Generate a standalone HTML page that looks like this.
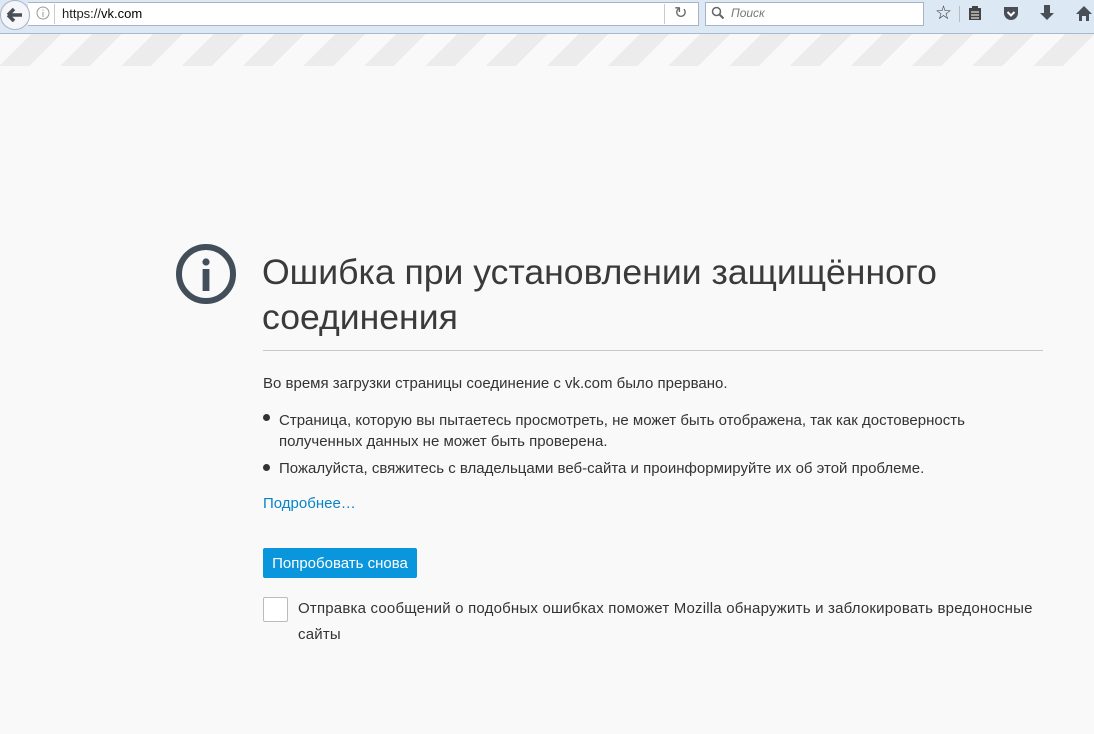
<!DOCTYPE html>
<html><head><meta charset="utf-8"><style>
html,body{margin:0;padding:0;width:1094px;height:734px;overflow:hidden;background:#f9f9fa;font-family:"Liberation Sans",sans-serif;color:#333}
.tb{position:absolute;left:0;top:0;width:1094px;height:33px;background:#dde8f5;border-bottom:1px solid #a9b8cc}
.url{position:absolute;left:28px;top:2px;width:670px;height:22px;background:#fff;border:1px solid #a8b4c4;border-left:none}
.back{position:absolute;left:0;top:0;width:28px;height:28px;border-radius:50%;background:#f4f6f9;border:1px solid #a8b4c4}
.search{position:absolute;left:705px;top:2px;width:217px;height:22px;background:#fff;border:1px solid #a8b4c4}
.stripes{position:absolute;left:0;top:34px;width:1094px;height:32px;background:repeating-linear-gradient(-45deg,#f9f9fa 0 22px,#ececec 22px 43px)}
.t{position:absolute;white-space:nowrap}
</style></head><body>
<div class="tb"></div>
<div class="url"></div>
<div class="back"><svg width="28" height="28"><path d="M7 14h14M7 14l6-6M7 14l6 6" stroke="#4a4f57" stroke-width="3.5" fill="none"/></svg></div>
<svg class="t" style="left:36px;top:6px" width="14" height="14"><circle cx="7" cy="7" r="6" stroke="#999" fill="none"/><path d="M7 6v5M7 3.5v1.2" stroke="#999"/></svg>
<div class="t" style="left:54px;top:4px;height:20px;border-left:1px solid #ccc"></div>
<div class="t" style="left:62px;top:6px;font-size:13px;color:#222">https://<span style="color:#000">vk.com</span></div>
<div class="t" style="left:664px;top:4px;height:20px;border-left:1px solid #ccc"></div>
<div class="t" style="left:674px;top:3px;font-size:16px;color:#666">&#8635;</div>
<div class="search"></div>
<svg class="t" style="left:711px;top:6px" width="14" height="14"><circle cx="5.5" cy="5.5" r="4" stroke="#666" stroke-width="1.5" fill="none"/><path d="M8.5 8.5l4 4" stroke="#666" stroke-width="2"/></svg>
<div class="t" style="left:731px;top:6px;font-size:12px;font-style:italic;color:#777">Поиск</div>
<div class="t" style="left:935px;top:2px;font-size:19px;color:#333">☆</div>
<div class="t" style="left:959px;top:6px;height:16px;border-left:1px solid #bbb"></div>
<svg class="t" style="left:968px;top:6px" width="14" height="15"><rect x="1" y="2" width="12" height="12" fill="#444"/><rect x="4" y="0" width="6" height="3" fill="#444"/><path d="M3 6h8M3 9h8M3 12h8" stroke="#fff"/></svg>
<svg class="t" style="left:1003px;top:6px" width="16" height="15"><path d="M1 1h14v6a7 7 0 0 1-14 0z" fill="#4a4f57"/><path d="M4.5 6l3.5 3.5 3.5-3.5" stroke="#fff" stroke-width="2" fill="none"/></svg>
<svg class="t" style="left:1040px;top:5px" width="14" height="16"><path d="M4 0h6v8h4l-7 7-7-7h4z" fill="#4a4f57"/></svg>
<svg class="t" style="left:1075px;top:5px" width="18" height="16"><path d="M9 1l8 8h-3v7h-3v-5h-4v5h-3v-7h-3z" fill="#4a4f57"/></svg>
<div class="stripes"></div>

<svg class="t" style="left:175px;top:243px" width="62" height="62"><circle cx="31" cy="31" r="27" stroke="#424e5a" stroke-width="6" fill="none"/><circle cx="31" cy="19" r="3.6" fill="#424e5a"/><rect x="27.6" y="26" width="6.8" height="22" fill="#424e5a"/></svg>
<div class="t" style="left:262px;top:250px;font-size:35.6px;font-weight:300;line-height:45px;color:#3a3a3a">Ошибка при установлении защищённого<br>соединения</div>
<div class="t" style="left:263px;top:350px;width:780px;border-top:1px solid #c8c8c8"></div>
<div class="t" style="left:263px;top:375px;font-size:15px">Во время загрузки страницы соединение с vk.com было прервано.</div>
<div class="t" style="left:263px;top:414px;width:7px;height:7px;border-radius:50%;background:#333"></div>
<div class="t" style="left:279px;top:410px;font-size:15px;line-height:21px">Страница, которую вы пытаетесь просмотреть, не может быть отображена, так как достоверность<br>полученных данных не может быть проверена.</div>
<div class="t" style="left:263px;top:464px;width:7px;height:7px;border-radius:50%;background:#333"></div>
<div class="t" style="left:279px;top:460px;font-size:15px">Пожалуйста, свяжитесь с владельцами веб-сайта и проинформируйте их об этой проблеме.</div>
<div class="t" style="left:263px;top:495px;font-size:15px;color:#0a84c6">Подробнее…</div>
<div class="t" style="left:263px;top:548px;width:154px;height:30px;background:#0996dc;border-radius:2px;color:#fff;font-size:15px;line-height:32px;text-align:center">Попробовать снова</div>
<div class="t" style="left:263px;top:597px;width:23px;height:23px;background:#fff;border:1px solid #bbb;border-radius:2px"></div>
<div class="t" style="left:298px;top:596px;font-size:15px;line-height:26px;letter-spacing:0.2px">Отправка сообщений о подобных ошибках поможет Mozilla обнаружить и заблокировать вредоносные<br>сайты</div>
</body></html>
